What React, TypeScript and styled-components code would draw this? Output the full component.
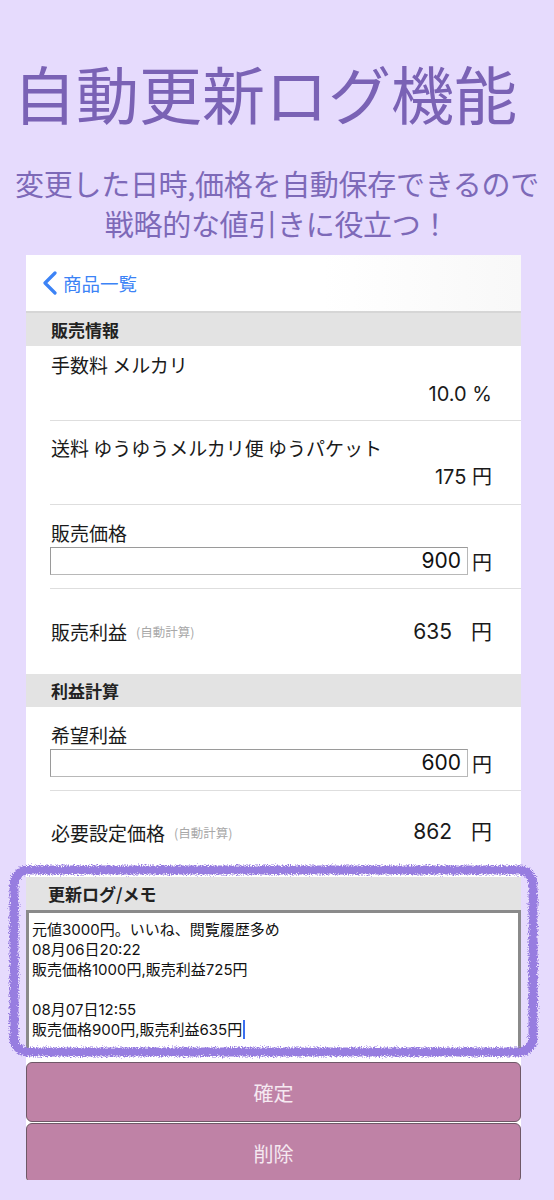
import React from 'react';
import styled, { createGlobalStyle } from 'styled-components';

const GlobalStyle = createGlobalStyle`
  body {
    margin: 0;
    background: #e6dbfd;
    font-family: "Noto Sans CJK JP", "Noto Sans", sans-serif;
  }
`;

const Page = styled.div`
  width: 554px;
  height: 1200px;
  overflow: hidden;
  background: #e6dbfd;
`;

const Title = styled.h1`
  margin: 61px 0 0;
  padding-right: 24px;
  font-size: 63px;
  line-height: 62px;
  font-weight: 400;
  text-align: center;
  color: #7a62b5;
  white-space: nowrap;
`;

const Subtitle = styled.p`
  margin: 40px 0 0;
  font-size: 29px;
  line-height: 40px;
  text-align: center;
  color: #7d69b8;
  white-space: nowrap;
  letter-spacing: -0.3px;
`;

const Panel = styled.div`
  margin: 12px 0 0 26px;
  width: 495px;
  background: #fff;
  display: flex;
  flex-direction: column;
  font-family: Inter, "Noto Sans CJK JP", sans-serif;
`;

const NavBar = styled.div`
  height: 56px;
  display: flex;
  align-items: center;
  gap: 5px;
  padding-left: 16px;
  background: linear-gradient(90deg, #ffffff 0%, #ffffff 60%, #f8f8f8 100%);
  border-bottom: 2px solid #d6d6d6;
  color: #3c83f6;
  font-family: "Noto Sans CJK JP", sans-serif;
  font-size: 18.5px;
`;

const SectionHeader = styled.div<{ $indent?: number }>`
  height: 33px;
  display: flex;
  align-items: center;
  padding-left: ${(p) => p.$indent ?? 25}px;
  background: #e3e3e3;
  font-family: "Noto Sans CJK JP", sans-serif;
  font-size: 17px;
  font-weight: 700;
  color: #222;
`;

const Row = styled.div<{ $top: number; $bottom: number; $line?: boolean }>`
  margin-left: 24px;
  padding: ${(p) => p.$top}px 29px ${(p) => p.$bottom}px 1px;
  border-bottom: ${(p) => (p.$line ? '1px solid #dedede' : 'none')};
  display: flex;
  flex-direction: column;
`;

const Label = styled.div`
  font-family: "Noto Sans CJK JP", sans-serif;
  font-size: 19px;
  line-height: 28px;
  color: #1a1a1a;
`;

const Value = styled.div`
  font-size: 20px;
  line-height: 30px;
  text-align: right;
  color: #1a1a1a;
`;

const InputLine = styled.div`
  display: flex;
  align-items: center;
  height: 28px;
  margin-left: -1px;
`;

const NumberBox = styled.div`
  box-sizing: border-box;
  width: 423px;
  height: 28px;
  border: 1.5px solid #9a9a9a;
  border-right-color: #b8b8b8;
  border-bottom-color: #b8b8b8;
  padding-right: 6px;
  font-size: 21px;
  line-height: 25px;
  text-align: right;
  color: #111;
`;

const Unit = styled.span`
  margin-left: 4px;
  font-family: "Noto Sans CJK JP", sans-serif;
  font-size: 20px;
  color: #1a1a1a;
`;

const CalcRow = styled.div<{ $height: number; $bottom?: number }>`
  box-sizing: border-box;
  height: ${(p) => p.$height}px;
  margin-left: 24px;
  padding: 0 29px ${(p) => p.$bottom ?? 0}px 1px;
  display: flex;
  align-items: center;
`;

const CalcLabel = styled.span`
  font-family: "Noto Sans CJK JP", sans-serif;
  font-size: 19px;
  color: #1a1a1a;
`;

const Auto = styled.span`
  margin-left: 9px;
  font-family: "Noto Sans CJK JP", sans-serif;
  font-size: 12.5px;
  color: #a8a8a8;
`;

const CalcValue = styled.span`
  margin-left: auto;
  font-size: 21px;
  line-height: 30px;
  color: #1a1a1a;
  display: flex;
  align-items: baseline;
  gap: 19px;
`;

const LogSection = styled.div`
  position: relative;
`;

const LogBox = styled.div`
  box-sizing: border-box;
  height: 144px;
  border: 3px solid #8a8a8a;
  padding: 7px 3px;
  font-size: 15px;
  line-height: 20px;
  color: #111;
  white-space: pre-wrap;
`;

const Caret = styled.span`
  display: inline-block;
  width: 2px;
  height: 19px;
  margin-left: 1px;
  vertical-align: -4px;
  background: #3b6ff0;
`;

const Highlight = styled.svg`
  position: absolute;
  left: -20px;
  top: -16px;
  width: 535px;
  height: 201px;
  pointer-events: none;
  overflow: visible;
`;

const Buttons = styled.div`
  margin-top: 8px;
  height: 118px;
  overflow: hidden;
  display: flex;
  flex-direction: column;
  gap: 1px;
`;

const ActionButton = styled.button`
  flex-shrink: 0;
  height: 60px;
  border: 1px solid #6f5867;
  border-radius: 6px;
  background: #bf82a6;
  color: #f5e9f1;
  font-family: "Noto Sans CJK JP", sans-serif;
  font-size: 20px;
  padding: 0;
`;

const logText = `元値3000円。いいね、閲覧履歴多め
08月06日20:22
販売価格1000円,販売利益725円

08月07日12:55
販売価格900円,販売利益635円`;

export default function App() {
  return (
    <Page>
      <GlobalStyle />
      <Title>自動更新ログ機能</Title>
      <Subtitle>
        変更した日時,価格を自動保存できるので
        <br />
        戦略的な値引きに役立つ！
      </Subtitle>
      <Panel>
        <NavBar>
          <svg width="16" height="24" viewBox="0 0 16 24">
            <polyline points="13,2 3,12 13,22" fill="none" stroke="#3c83f6" strokeWidth="3.2" strokeLinecap="round" strokeLinejoin="round" />
          </svg>
          商品一覧
        </NavBar>

        <SectionHeader>販売情報</SectionHeader>
        <Row $top={5} $bottom={11} $line>
          <Label>手数料 メルカリ</Label>
          <Value>10.0 %</Value>
        </Row>
        <Row $top={13} $bottom={12} $line>
          <Label>送料 ゆうゆうメルカリ便 ゆうパケット</Label>
          <Value>175 円</Value>
        </Row>
        <Row $top={14} $bottom={13} $line>
          <Label>販売価格</Label>
          <InputLine>
            <NumberBox>900</NumberBox>
            <Unit>円</Unit>
          </InputLine>
        </Row>
        <CalcRow $height={85}>
          <CalcLabel>販売利益</CalcLabel>
          <Auto>(自動計算)</Auto>
          <CalcValue>
            <span>635</span>
            <span>円</span>
          </CalcValue>
        </CalcRow>

        <SectionHeader>利益計算</SectionHeader>
        <Row $top={14} $bottom={13} $line>
          <Label>希望利益</Label>
          <InputLine>
            <NumberBox>600</NumberBox>
            <Unit>円</Unit>
          </InputLine>
        </Row>
        <CalcRow $height={86} $bottom={4}>
          <CalcLabel>必要設定価格</CalcLabel>
          <Auto>(自動計算)</Auto>
          <CalcValue>
            <span>862</span>
            <span>円</span>
          </CalcValue>
        </CalcRow>

        <LogSection>
          <SectionHeader $indent={22}>更新ログ/メモ</SectionHeader>
          <LogBox>
            {logText}
            <Caret />
          </LogBox>
          <Highlight viewBox="0 0 535 201">
            <defs>
              <filter id="rough" x="-5%" y="-10%" width="110%" height="120%">
                <feTurbulence type="fractalNoise" baseFrequency="0.9" numOctaves="2" seed="3" result="noise" />
                <feDisplacementMap in="SourceGraphic" in2="noise" scale="6" xChannelSelector="R" yChannelSelector="G" />
              </filter>
            </defs>
            <rect x="8" y="9" width="519" height="182" rx="14" fill="none" stroke="#977de0" strokeWidth="9" filter="url(#rough)" />
          </Highlight>
        </LogSection>

        <Buttons>
          <ActionButton>確定</ActionButton>
          <ActionButton>削除</ActionButton>
        </Buttons>
      </Panel>
    </Page>
  );
}
